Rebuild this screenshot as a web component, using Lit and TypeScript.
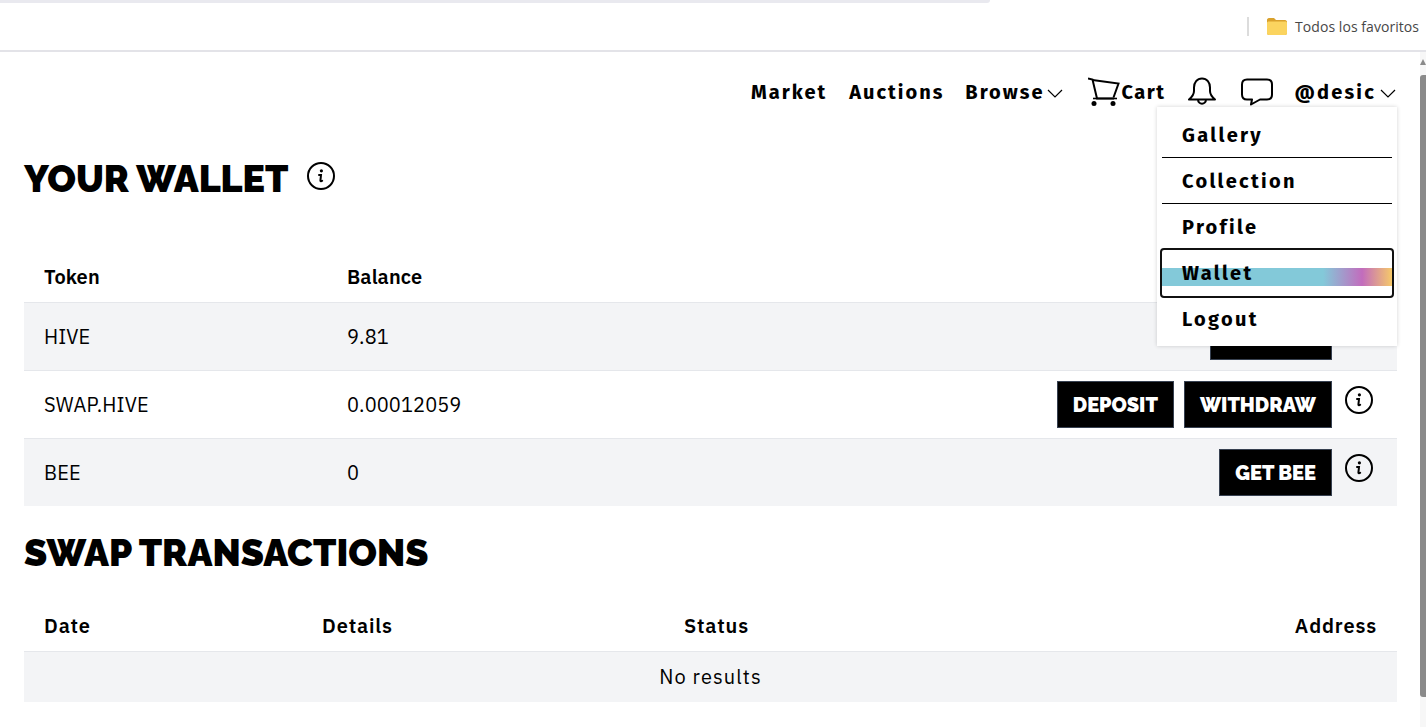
import {LitElement, html, css, svg} from 'lit';
import {customElement} from 'lit/decorators.js';

const chevron = html`<svg class="chev" width="16" height="9" viewBox="0 0 16 9"><path fill="none" stroke="#000" stroke-width="1.2" d="M1 1l7 7 7-7"/></svg>`;

const infoIcon = html`<svg class="info" width="28" height="28" viewBox="0 0 28 28">
    <circle cx="14" cy="14" r="13" fill="none" stroke="#000" stroke-width="2"/>
    ${svg`<circle cx="14.4" cy="8.8" r="1.6" fill="#000"/>`}
    <path fill="none" stroke="#000" stroke-width="2" stroke-linecap="round" d="M12 13h2l-.6 5.600c0 .8.8 1 1.800.2"/>
</svg>`;

const cartIcon = html`<svg width="33" height="30" viewBox="0 0 33 30"><g fill="none" stroke="#000" stroke-width="2">
    <path d="M0 1.5l4.5 1 4.5 19h17"/>
    <path d="M4.5 3l26 3.5-5 14"/>
    <path d="M5 21.500h24" stroke-width="1.600"/>
    </g><circle cx="6" cy="26.500" r="2.500"/><circle cx="25" cy="26.500" r="2.500"/></svg>`;

const bellIcon = html`<svg width="28" height="29" viewBox="0 0 28 29"><path fill="none" stroke="#000" stroke-width="2" stroke-linejoin="round" d="M14 1.500c-5 0-8 4-8 9v3.500c0 4-2 6-5 8.500h26c-3-2.500-5-4.500-5-8.500v-3.500c0-5-3-9-8-9zM10 22.500c0 5.500 8 5.500 8 0"/></svg>`;

const chatIcon = html`<svg width="32" height="28" viewBox="0 0 32 28"><path fill="none" stroke="#000" stroke-width="2" stroke-linejoin="round" d="M6 1.500h20c3 0 5 2 5 5v10c0 3-2 5-5 5h-7l-9 5 1-5h-5c-3 0-5-2-5-5v-10c0-3 2-5 5-5z"/></svg>`;

const folderIcon = html`<svg width="20" height="17" viewBox="0 0 20 17"><path fill="#d9a12c" d="M0 2c0-1 .7-2 2-2h5l2 2h9c1.300 0 2 1 2 2v11c0 1-.7 2-2 2H2c-1.300 0-2-1-2-2z"/><path fill="#fbd45f" d="M0 5c0-1 .7-1.500 2-1.500h16c1.300 0 2 .5 2 1.500v10c0 1-.7 2-2 2H2c-1.300 0-2-1-2-2z"/></svg>`;

@customElement('app-root')
class AppRoot extends LitElement {

    render() {
        return html`
            <div class="chrome">
                <div class="tabstrip"></div>
                <div class="bookmarks">
                    <span class="sep"></span>
                    ${folderIcon}
                    <span class="fav">Todos los favoritos</span>
                </div>
            </div>
            <div class="viewport">
                <main>
                    <nav>
                        <a class="market">Market</a>
                        <a class="auctions">Auctions</a>
                        <a class="browse">Browse ${chevron}</a>
                        <a class="cart">${cartIcon}Cart</a>
                        <a class="bell">${bellIcon}</a>
                        <a class="chat">${chatIcon}</a>
                        <a class="user">@desic ${chevron}</a>
                        <div class="menu">
                            <div class="item line">Gallery</div>
                            <div class="item line">Collection</div>
                            <div class="item">Profile</div>
                            <div class="item active">Wallet</div>
                            <div class="item">Logout</div>
                        </div>
                    </nav>

                    <div class="title">
                        <h1>YOUR WALLET</h1>
                        ${infoIcon}
                    </div>

                    <div class="wallet head">
                        <span>Token</span><span>Balance</span><span></span>
                    </div>
                    <div class="wallet row grey">
                        <span>HIVE</span><span>9.81</span>
                        <div class="actions"><button class="hive"></button>${infoIcon}</div>
                    </div>
                    <div class="wallet row">
                        <span>SWAP.HIVE</span><span>0.00012059</span>
                        <div class="actions"><button>DEPOSIT</button><button>WITHDRAW</button>${infoIcon}</div>
                    </div>
                    <div class="wallet row grey last">
                        <span>BEE</span><span>0</span>
                        <div class="actions"><button>GET BEE</button>${infoIcon}</div>
                    </div>

                    <h1 class="swap">SWAP TRANSACTIONS</h1>

                    <div class="swaps head">
                        <span>Date</span><span>Details</span><span>Status</span><span class="end">Address</span>
                    </div>
                    <div class="empty">No results</div>
                </main>
                <div class="scrollbar">
                    <span class="arrow"></span>
                    <span class="thumb"></span>
                </div>
            </div>
        `;
    }

    static styles = css`
        :host {
            display: block;
            height: 727px;
            overflow: hidden;
            background: #fff;
            color: #000;
            font-family: "IBM Plex Sans", "Noto Sans", Roboto, sans-serif;
        }

        .chrome {
            height: 50px;
            border-bottom: 2px solid #e3e3e8;
            display: flex;
            flex-direction: column;
        }

        .tabstrip {
            width: 990px;
            height: 3px;
            background: #e9e9ef;
            border-bottom-right-radius: 6px;
        }

        .bookmarks {
            flex: 1;
            display: flex;
            align-items: center;
            justify-content: flex-end;
            padding: 0 7px 0 0;
        }

        .sep {
            width: 2px;
            height: 19px;
            background: #dcdcdc;
            margin-right: 18px;
        }

        .fav {
            font: 400 14px "Open Sans", sans-serif;
            letter-spacing: .05px;
            color: #474747;
            margin-left: 8px;
        }

        .viewport {
            display: flex;
            height: 675px;
        }

        main {
            flex: 1;
            padding: 0 23px 0 24px;
        }

        nav {
            position: relative;
            display: flex;
            justify-content: flex-end;
            align-items: center;
            height: 80px;
            padding-right: 1px;
            font: 700 20px "Fira Sans", "Noto Sans", sans-serif;
            letter-spacing: 2px;
        }

        nav a {
            display: flex;
            align-items: center;
            white-space: nowrap;
        }

        .auctions { margin-left: 22px; }
        .browse { margin-left: 21px; gap: 3px; }
        .cart { margin-left: 25px; letter-spacing: 1.5px; }
        .bell { margin-left: 23px; }
        .chat { margin-left: 25px; }
        .user { margin-left: 21px; gap: 4px; letter-spacing: 2.200px; }

        .chev { margin-top: 3px; }

        .bell svg, .chat svg { margin-top: -1px; }

        .menu {
            position: absolute;
            top: 55px;
            right: 0;
            width: 230px;
            padding: 5px 5px 4px;
            background: #fff;
            box-shadow: 0 0 4px rgba(0, 0, 0, .18);
            letter-spacing: 2.300px;
        }

        .item {
            height: 46px;
            box-sizing: border-box;
            padding-left: 20px;
            display: flex;
            align-items: center;
        }

        .item.line {
            border-bottom: 1px solid #000;
        }

        .item.active {
            outline: 2px solid #111;
            border-radius: 2px;
            background: linear-gradient(90deg, #83c9d9 0, #83c9d9 70%, #c26cbd 87%, #f6c969 100%) 0 18px / 100% 18px no-repeat;
        }

        .title {
            display: flex;
            align-items: center;
            gap: 19px;
            height: 119px;
            margin-top: 1px;
            padding-bottom: 27px;
            box-sizing: border-box;
        }

        h1 {
            margin: 0;
            font: 900 37.500px Raleway, Inter, sans-serif;
        }

        .title .info {
            margin-bottom: 7px;
        }

        .wallet {
            display: grid;
            grid-template-columns: 303px 1fr auto;
            align-items: center;
            padding: 0 20px;
        }

        .head {
            font-size: 20px;
            font-weight: 600;
            border-bottom: 1px solid #e5e7eb;
        }

        .wallet.head {
            height: 51px;
            box-sizing: border-box;
            padding-bottom: 2px;
            letter-spacing: .1px;
        }

        .row {
            height: 68px;
            box-sizing: border-box;
            font-size: 20px;
            letter-spacing: .1px;
            border-bottom: 1px solid #e5e7eb;
        }

        .row.last {
            height: 67px;
            border-bottom: 0;
        }

        .grey {
            background: #f3f4f6;
        }

        .actions {
            display: flex;
            align-items: center;
            gap: 10px;
            padding-right: 4px;
        }

        .actions .info {
            margin: -9px 0 0 3px;
        }

        button {
            height: 47px;
            padding: 0 15px;
            border: 1px solid #374151;
            background: #000;
            color: #fff;
            font: 900 20px Raleway, Inter, sans-serif;
        }

        button.hive {
            width: 122px;
        }

        .swap {
            height: 96px;
            line-height: 94px;
        }

        .swaps {
            display: grid;
            grid-template-columns: 278px 362px 1fr auto;
            align-items: center;
            padding: 0 20px 2px;
            height: 47px;
            letter-spacing: .85px;
        }

        .end {
            text-align: right;
        }

        .empty {
            height: 48px;
            padding-bottom: 2px;
            display: flex;
            align-items: center;
            justify-content: center;
            background: #f3f4f6;
            font-size: 20px;
            letter-spacing: 1.100px;
        }

        .scrollbar {
            width: 6px;
            display: flex;
            flex-direction: column;
            align-items: stretch;
            background: #f7f7f7;
        }

        .arrow {
            margin-top: 7px;
            width: 0;
            height: 0;
            border-left: 3px solid transparent;
            border-right: 3px solid transparent;
            border-bottom: 6px solid #8a8a8a;
        }

        .thumb {
            margin-top: 10px;
            height: 622px;
            background: #8a8a8a;
            border-radius: 3px 0 0 3px;
        }
    `;
}
